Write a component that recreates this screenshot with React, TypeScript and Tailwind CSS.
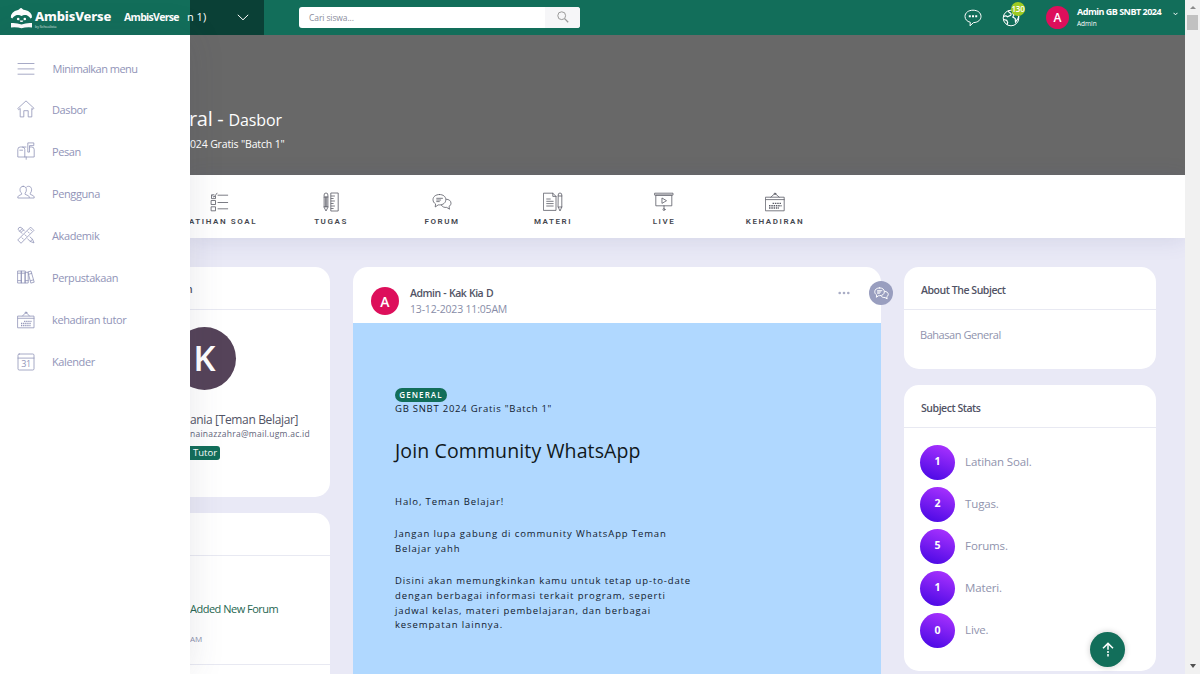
import React from "react";

type IconProps = { className?: string };

const Svg: React.FC<{
  size?: number;
  box?: number;
  className?: string;
  children: React.ReactNode;
}> = ({ size = 18, box = 18, className = "", children }) => (
  <svg
    width={size}
    height={size}
    viewBox={`0 0 ${box} ${box}`}
    fill="none"
    stroke="currentColor"
    strokeWidth="0.8"
    strokeLinejoin="round"
    strokeLinecap="round"
    className={`shrink-0 ${className}`}
  >
    {children}
  </svg>
);

const MenuIcon = () => (
  <Svg>
    <path d="M1 3.5h16M1 8.9h16M1 14.2h16" />
  </Svg>
);

const HomeIcon = () => (
  <Svg>
    <path d="M1 8.3 9 .9l8 7.4-1 1.1-1.2-1v8.5h-3.6v-6.2H6.8v6.2H3.2V8.4L2 9.4z" />
  </Svg>
);

const MailboxIcon = () => (
  <Svg>
    <path d="M9 5H3.2Q.8 5 .8 7.6V15h7V7.6Q7.8 5 5.5 5M7.8 15h9.4V7.5Q17.2 5 14.6 5h-2M9.2 15v2.3M2.800 8.200h2.800M10.800 9.700V.9h6v2.700h-4.300v6.100z" />
  </Svg>
);

const UsersIcon = () => (
  <Svg>
    <path d="M6.200 2.300c2 0 3.200 1.400 3.200 3.500 0 1.600-.6 2.700-1.300 3.400v1.100l3 1.300c.8.400 1.200 1 1.200 2.400H.8c0-1.400.3-2 1.200-2.400l2.600-1.300V9.200C3.700 8.500 3 7.400 3 5.800c0-2.100 1.200-3.500 3.200-3.500z" />
    <path d="M9.300 3.200c.5-.6 1.300-.9 2.200-.9 2 0 3.100 1.400 3.100 3.500 0 1.600-.6 2.700-1.300 3.400v1.100l2.700 1.300c.9.400 1.200 1 1.200 2.400h-4.500" />
  </Svg>
);

const PencilRulerIcon = () => (
  <Svg>
    <path d="m1 13.700 12.600-12.600 3.300 3.300L4.300 17zM5 11.800l1.300 1.300M8 8.800l1.500 1.500M11 5.800l1.300 1.300M13.300 3.500l1.200 1.200" />
    <path d="M7.300 4.900 4.600 1.800Q3 .6 1.700 1.900T2 4.700l3.100 2.600M13 10.900l2.500 2.400 1.500 3.600-3.800-1.500-2.500-2.400M2.600 5.200l2.600-2.600M6.500 4l-2 2M13.200 15.400l2.300-2.100" />
  </Svg>
);

const BooksIcon = () => (
  <Svg>
    <path d="M1 3h3.500v12H1zM4.500 3h3.800v12H4.500zM8.300 4.300h2.900V15H8.300zM11.300 3.800l2.700-.8 3.200 11.200-3 .8zM1 5.200h7.300M1 12.600h3.500M8.300 12.600h2.900M12 6.200l2.700-.8M13.500 12.700l2.900-.8" />
  </Svg>
);

const BoardIcon = () => (
  <Svg>
    <path d="M1 5.100h16v11.700H1zM1 7.300h16M5.500 5 9 1.300 12.500 5" />
    <circle cx="9" cy="1.700" r=".8" />
    <path
      d="M4 14.500h9.500M4 12.400h10.500M7.100 10.300h7.400"
      strokeWidth="1.300"
      strokeLinecap="butt"
      strokeDasharray="1.300 .8"
    />
  </Svg>
);

const CalendarIcon = () => (
  <Svg>
    <rect x="1" y="1" width="16" height="16" rx="1.200" />
    <path d="M1 5.100h16" />
    <text
      x="9"
      y="14.200"
      textAnchor="middle"
      fontSize="9"
      stroke="none"
      fill="currentColor"
      fontFamily="Open Sans"
    >
      31
    </text>
  </Svg>
);

const QuizIcon = () => (
  <Svg size={20} box={20}>
    <path d="M1.500 8.500h4v4h-4zM1.500 14.800h4v4h-4zM8 3.200h9.700M8 10.500h9.700M8 16.800h9.700M5.500 4.300v2.300h-4V2.800H4M2.700 4 4 5.200l3-4" />
  </Svg>
);

const TaskIcon = () => (
  <Svg size={20} box={20}>
    <path d="M3.100 5V3Q3.100 1 5 1t1.900 2v12.300L5 19l-1.900-3.700V5h3.800M3.100 14.800h3.800M4.400 5v9.800M5.700 5v9.800M10.200 1h7v18h-7zM10.200 4h3.300M10.200 6.500h2M10.200 9h3.300M10.200 11.500h2M10.200 14h3.300M10.200 16.500h2" />
  </Svg>
);

const ChatIcon: React.FC<IconProps & { size?: number }> = ({
  className,
  size = 20,
}) => (
  <Svg size={size} box={20} className={className}>
    <path d="M7.500 2.500c3.900 0 6.300 2.200 6.300 5.200s-2.500 5.200-6.300 5.200h-1.300L3.200 15l.4-3.100C1.900 10.900 1 9.500 1 7.700c0-3 2.600-5.200 6.500-5.200z" />
    <path d="M14.300 7.200c2.800.1 4.700 1.700 4.700 4 0 1.400-.7 2.500-2 3.200l.5 2.800-2.800-1.800c-2.300.2-4.200-.4-5.200-2M4.700 6.300h5.800M4.700 8h4M4.700 9.600h2.600" />
  </Svg>
);

const MaterialIcon = () => (
  <Svg size={20} box={20}>
    <path d="M.8 1.200h9l3.200 3.200v14H.8zM9.800 1.200v3.200H13M3.700 7h3.600M3.700 9.300h6.500M3.700 11.600h6.500M3.700 14h6.500M15.200 4V3q0-2 1.800-2t1.800 2v12l-1.800 4-1.800-4zM15.200 4h3.600M15.200 15h3.600" />
  </Svg>
);

const LiveIcon = () => (
  <Svg size={20} box={20}>
    <path d="M1 1.200h18v1.900H1zM2.200 3.200h15.600v10.600H2.200zM10 13.800v2.500M8.300 6.200l4.200 2.500-4.200 2.500z" />
    <circle cx="10" cy="17.500" r="1" />
  </Svg>
);

const AttendanceIcon = () => (
  <Svg size={20} box={20}>
    <path d="M.8 5.200h18.400v13.600H.8zM.8 7.600h18.400M5.800 5.200 10 1.400l4.200 3.800" />
    <circle cx="10" cy="1.800" r=".8" />
    <path
      d="M4 16h10M4 13.700h12.500M7.600 11.400h8.900"
      strokeWidth="1.400"
      strokeLinecap="butt"
      strokeDasharray="1.500 .8"
    />
  </Svg>
);

const LogoMark = () => (
  <svg width="23" height="22" viewBox="0 0 23 22" fill="white" className="shrink-0">
    <path d="M.8 10.500Q.8 4.500 8 3q1-.2 1.700-1.200Q11 .2 12.500 1.900 13.300 2.900 15 3q7 1.500 7 7.500l-1.600 1Q19 8.400 15.300 8.400q-2 0-3.800.8-1.700-.8-3.800-.8-3.900 0-5.400 3.100z" />
    <path d="M4.200 11.500Q4.800 7.900 7.900 8.100q1.900 0 3.600.9 1.700-.9 3.600-.9 3.100-.2 3.500 3.400v3.400q-3.600-.2-7.100 1-3.600-1.200-7.300-1z" fill="#126e5a" />
    <circle cx="8.200" cy="12" r="1.300" />
    <circle cx="14.800" cy="12" r="1.300" />
    <path d="M9.600 13.600h3.900q-.5 1.500-2 1.500t-1.900-1.500z" />
    <path d="M1 16q5.500-.5 10.500 1.500 5-2 10.500-1.500v4.500q-6-.5-10.500.8Q7 20 1 20.500z" />
  </svg>
);

const menuItems = [
  { label: "Dasbor", icon: <HomeIcon /> },
  { label: "Pesan", icon: <MailboxIcon /> },
  { label: "Pengguna", icon: <UsersIcon /> },
  { label: "Akademik", icon: <PencilRulerIcon /> },
  { label: "Perpustakaan", icon: <BooksIcon /> },
  { label: "kehadiran tutor", icon: <BoardIcon /> },
  { label: "Kalender", icon: <CalendarIcon /> },
];

const tabs = [
  { label: "LATIHAN SOAL", icon: <QuizIcon /> },
  { label: "TUGAS", icon: <TaskIcon /> },
  { label: "FORUM", icon: <ChatIcon /> },
  { label: "MATERI", icon: <MaterialIcon /> },
  { label: "LIVE", icon: <LiveIcon /> },
  { label: "KEHADIRAN", icon: <AttendanceIcon /> },
];

const stats = [
  { value: 1, label: "Latihan Soal." },
  { value: 2, label: "Tugas." },
  { value: 5, label: "Forums." },
  { value: 1, label: "Materi." },
  { value: 0, label: "Live." },
];

const Header = () => (
  <header className="flex h-[35px] shrink-0 bg-[#126e5a] text-white">
    <div className="flex w-[190px] shrink-0 items-center pl-[10px]">
      <LogoMark />
      <div className="ml-[2px] w-[89px] pt-[2px]">
        <p className="font-['Noto_Sans'] text-[13px] font-extrabold leading-[15px] tracking-[-0.15px]">
          AmbisVerse
        </p>
        <p className="text-[3.500px] leading-[5px] text-white/80">by Schoolista</p>
      </div>
      <span className="pt-[1px] text-[10.500px] font-bold tracking-[-0.7px]">
        AmbisVerse
      </span>
    </div>
    <div className="flex w-[74px] shrink-0 items-center justify-between bg-[#0a4036] pr-[15px]">
      <span className="-ml-[3px] whitespace-nowrap text-[11px]">n 1)</span>
      <svg width="12" height="7" viewBox="0 0 12 7" fill="none" stroke="white">
        <path d="m.8 .8 5.200 5 5.200-5" />
      </svg>
    </div>
    <div className="ml-[35px] mt-[7px] flex h-[21px] w-[281px] overflow-hidden rounded-[3px] bg-white">
      <span className="flex-1 pl-[10px] text-[8.500px] leading-[22px] tracking-[-0.1px] text-[#8b8d9c]">
        Cari siswa...
      </span>
      <span className="flex w-[35px] items-center justify-center bg-[#f6f6f8] text-[#9a9a9a]">
        <svg width="12" height="12" viewBox="0 0 12 12" fill="none" stroke="currentColor" className="-mt-[2px]">
          <circle cx="4.700" cy="4.700" r="3.900" />
          <path d="m7.600 7.600 3.600 3.600" strokeWidth="1.300" />
        </svg>
      </span>
    </div>
    <div className="ml-auto flex items-center pr-[7px]">
      <svg width="18" height="18" viewBox="0 0 18 18" fill="none" stroke="white" strokeLinejoin="round">
        <path d="M9 1.200c4.700 0 8 2.600 8 6.200 0 3.500-3.100 6.100-7.500 6.200L6 16.800l.3-3.500C3 12.500 1 10.300 1 7.400c0-3.600 3.400-6.200 8-6.200z" />
        <path d="M4.800 7.300h2M8 7.300h2M11.200 7.300h2" strokeWidth="2" />
      </svg>
      <div className="relative ml-[20px]">
        <svg width="18" height="18" viewBox="0 0 18 18" fill="none" stroke="white">
          <circle cx="9" cy="9" r="7.800" />
          <path
            d="M1.500 7.500q2.500-1.500 4 .3l3.200-1.500Q9.700 4.200 7.500 3.700L6.200 2M1.700 10.500l3 .8 1 2.200-.7 2.300M11.500 2q-1.500 2.500.5 4l-1.200 2 2.400 1.500.3 3.500 2.500-3.500 1-2.500"
            strokeWidth="1.200"
          />
        </svg>
        <span className="absolute -top-[7px] left-[9px] flex h-[14px] w-[14px] items-center justify-center rounded-full bg-[#9ecb22] text-[8px] font-semibold tracking-[-0.3px]">
          130
        </span>
      </div>
      <span className="ml-[26px] flex size-[23px] items-center justify-center rounded-full bg-[#dd0f5b] text-[12px] font-semibold">
        A
      </span>
      <div className="ml-[8px] w-[96px] whitespace-nowrap">
        <p className="text-[9px] font-bold leading-[12px] tracking-[-0.5px]">
          Admin GB SNBT 2024
        </p>
        <p className="text-[6.500px] leading-[11px]">Admin</p>
      </div>
      <svg width="5" height="4" viewBox="0 0 5 4" fill="none" stroke="white" className="mb-[8px]">
        <path d="m.5 .8 2 2 2-2" />
      </svg>
    </div>
  </header>
);

const Sidebar = () => (
  <aside className="relative z-10 w-[190px] shrink-0 bg-white pl-[17px] pt-[14px] text-[11px] tracking-[-0.400px] text-[#9194b8] shadow-[0_0_34px_0_rgba(63,66,87,0.12)]">
    <div className="flex h-[40px] items-center gap-[18px]">
      <MenuIcon />
      <span className="-ml-[0.500px] tracking-[-0.500px]">Minimalkan menu</span>
    </div>
    <nav>
      {menuItems.map((item) => (
        <div key={item.label} className="flex h-[42.100px] items-center gap-[17px]">
          <span className="-mt-[2px]">{item.icon}</span>
          <span>{item.label}</span>
        </div>
      ))}
    </nav>
  </aside>
);

const CardTitle: React.FC<{ children?: React.ReactNode }> = ({ children }) => (
  <h6 className="h-[43px] border-b border-[#e8e9f2] pl-[17px] text-[10.500px] font-semibold leading-[46px] tracking-[-0.450px] text-[#515365]">
    {children}
  </h6>
);

const TutorColumn = () => (
  <div className="w-[140px] shrink-0">
    <section className="h-[230px] rounded-r-[15px] bg-white">
      <h6 className="flex h-[43px] w-full items-center border-b border-[#e8e9f2] pt-[4px] text-[10.500px] font-semibold text-[#515365]">
        <span className="-ml-[4px]">n</span>
      </h6>
      <div className="-ml-[17px] mt-[17px] flex size-[63px] items-center justify-center rounded-full bg-[#554359] text-[35px] font-semibold text-white">
        <span>K</span>
      </div>
      <p className="mt-[21px] whitespace-nowrap text-[12px] font-medium leading-[17px] tracking-[-0.350px] text-[#515365]">
        ania [Teman Belajar]
      </p>
      <p className="whitespace-nowrap text-[8.500px] leading-[12px] tracking-[0.260px] text-[#62647a]">
        nainazzahra@mail.ugm.ac.id
      </p>
      <span className="mt-[6px] flex h-[14px] w-[30px] items-center justify-center rounded-r-[3px] bg-[#126e5a] text-[9.500px] font-medium text-white">
        Tutor
      </span>
    </section>
    <section className="mt-[16px] h-[180px] rounded-tr-[15px] bg-white">
      <div className="h-[43px] border-b border-[#e8e9f2]" />
      <div className="h-[109px] border-b border-[#e8e9f2] pt-[45px]">
        <p className="whitespace-nowrap text-[11px] leading-[16px] tracking-[-0.500px] text-[#256650]">
          Added New Forum
        </p>
        <p className="mt-[16px] text-[8px] leading-[12px] text-[#8b8fae]">AM</p>
      </div>
    </section>
  </div>
);

const Post = () => (
  <article className="relative ml-[23px] w-[528px] shrink-0 rounded-t-[15px] bg-white">
    <div className="flex h-[56px] pl-[18px] pt-[20px]">
      <span className="flex size-[28px] items-center justify-center rounded-full bg-[#dd0f5b] text-[14px] font-semibold text-white">
        A
      </span>
      <div className="ml-[11px] flex-1">
        <p className="-mt-[1px] text-[10.500px] font-semibold leading-[15px] tracking-[-0.500px] text-[#515365] [word-spacing:0.500px]">
          Admin - Kak Kia D
        </p>
        <p className="text-[10.500px] leading-[16px] tracking-[-0.180px] text-[#888da8]">
          13-12-2023 11:05AM
        </p>
      </div>
      <svg width="12" height="4" viewBox="0 0 12 4" fill="#a9adc5" className="mr-[31px] mt-[4px]">
        <circle cx="1.700" cy="2" r="1.300" />
        <circle cx="6" cy="2" r="1.300" />
        <circle cx="10.300" cy="2" r="1.300" />
      </svg>
    </div>
    <span className="absolute -right-[12px] top-[14px] flex size-[24px] items-center justify-center rounded-full bg-[#999ebf] text-white">
      <ChatIcon size={15} className="stroke-[1.300]" />
    </span>
    <div className="h-[351px] bg-[#b0d8ff] pl-[42px] pt-[65px] text-[9.500px] leading-[14.600px] tracking-[0.880px] text-[#10202e]">
      <span className="flex h-[14px] w-[52px] items-center justify-center rounded-full bg-[#126e5a] text-[8px] font-semibold tracking-[1.100px] text-white">
        GENERAL
      </span>
      <p className="tracking-[0.750px]">GB SNBT 2024 Gratis "Batch 1"</p>
      <h2 className="mt-[20px] text-[19.500px] leading-[28px] tracking-[0.120px] text-[#101820]">
        Join Community WhatsApp
      </h2>
      <p className="mt-[30px]">Halo, Teman Belajar!</p>
      <p className="mt-[18px]">
        Jangan lupa gabung di community WhatsApp Teman
        <br />
        Belajar yahh
      </p>
      <p className="mt-[18px]">
        Disini akan memungkinkan kamu untuk tetap up-to-date
        <br />
        dengan berbagai informasi terkait program, seperti
        <br />
        jadwal kelas, materi pembelajaran, dan berbagai
        <br />
        kesempatan lainnya.
      </p>
    </div>
  </article>
);

const SubjectColumn = () => (
  <div className="ml-[23px] w-[252px] shrink-0">
    <section className="h-[102px] rounded-[15px] bg-white">
      <CardTitle>About The Subject</CardTitle>
      <p className="pl-[16px] pt-[16px] text-[11px] leading-[18px] tracking-[-0.450px] text-[#9093ad]">
        Bahasan General
      </p>
    </section>
    <section className="mt-[16px] h-[286px] rounded-[15px] bg-white">
      <CardTitle>Subject Stats</CardTitle>
      <ul className="flex flex-col gap-[7px] pl-[16px] pt-[16.500px]">
        {stats.map((stat) => (
          <li key={stat.label} className="flex items-center gap-[10px]">
            <span className="flex size-[35.100px] items-center justify-center rounded-full bg-[linear-gradient(200deg,#ab33ff_5%,#4808e4_95%)] text-[10.500px] font-bold text-white">
              {stat.value}
            </span>
            <span className="-mt-[1px] text-[11.500px] tracking-[-0.150px] text-[#9093ad]">
              {stat.label}
            </span>
          </li>
        ))}
      </ul>
    </section>
  </div>
);

const Main = () => (
  <main className="w-[995px] shrink-0 overflow-hidden bg-[#e9e9f6]">
    <div className="h-[140px] bg-[#686868] pt-[71px] text-white">
      <h1 className="-ml-[1px] whitespace-nowrap text-[20px] leading-[26px] tracking-[-0.300px]">
        ral - <span className="text-[16px] tracking-[-0.100px]">Dasbor</span>
      </h1>
      <p className="mt-[3px] whitespace-nowrap text-[10.500px] leading-[16px] tracking-[-0.150px]">
        024 Gratis "Batch 1"
      </p>
    </div>
    <div className="flex h-[63px] bg-white shadow-[0_2px_20px_0_rgba(60,70,130,0.13)]">
      <div className="-ml-[26px] flex text-[#5a5c66]">
        {tabs.map((tab) => (
          <div
            key={tab.label}
            className="flex w-[111px] flex-col items-center pt-[17px]"
          >
            {tab.icon}
            <span className="mt-[5px] whitespace-nowrap pl-[1px] font-['Roboto'] text-[8px] font-semibold leading-[10px] tracking-[1.580px] text-[#45474f]">
              {tab.label}
            </span>
          </div>
        ))}
      </div>
    </div>
    <div className="flex pt-[29px]">
      <TutorColumn />
      <Post />
      <SubjectColumn />
    </div>
  </main>
);

const App: React.FC = () => {
  return (
    <div className="relative flex h-[674px] w-[1200px] overflow-hidden bg-white font-['Open_Sans',sans-serif]">
      <div className="flex w-[1185px] flex-col overflow-hidden">
        <Header />
        <div className="flex min-h-0 flex-1">
          <Sidebar />
          <Main />
        </div>
      </div>
      <div className="flex w-[15px] flex-col items-center justify-between bg-[#f1f1f1] py-[6px]">
        <div className="flex w-full flex-col items-center">
          <div className="size-0 border-x-[3px] border-b-[3px] border-x-transparent border-b-[#8b8b8b]" />
          <div className="mt-[6px] h-[15px] w-[11px] bg-[#c1c1c1]" />
        </div>
        <div className="size-0 border-x-[3px] border-t-[4px] border-x-transparent border-t-[#505050]" />
      </div>
      <button className="absolute bottom-[7px] right-[75px] flex size-[35px] items-center justify-center rounded-full bg-[#126e5a] text-white shadow-[0_0_6px_rgba(0,0,0,0.2)]">
        <svg width="12" height="15" viewBox="0 0 12 15" fill="none" stroke="currentColor" strokeWidth="1.500">
          <path d="M1 6.200 6 1.400l5 4.800" />
          <path d="M6 1.500v13" strokeDasharray="6.200 1.200 2 1.200" />
        </svg>
      </button>
    </div>
  );
};

export default App;
